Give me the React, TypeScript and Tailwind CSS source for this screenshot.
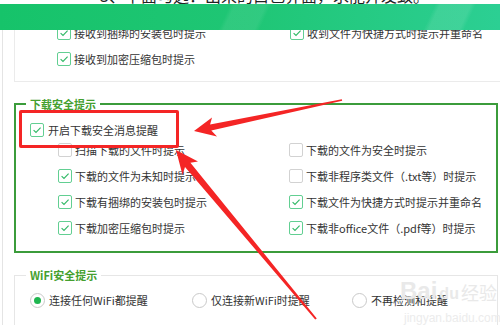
import React from "react";

const Check = ({ checked }: { checked: boolean }) => (
  <span
    className={
      checked
        ? "flex h-[14px] w-[14px] shrink-0 items-center justify-center rounded-[2px] border border-[#62cf92] bg-white"
        : "flex h-[14px] w-[14px] shrink-0 items-center justify-center rounded-[2px] border border-[#d2d2d2] bg-white"
    }
  >
    {checked && (
      <svg width="10" height="10" viewBox="0 0 10 10">
        <path d="M1.6 5.1 L4 7.5 L8.6 2.7" stroke="#2fb865" strokeWidth="1.1" fill="none" />
      </svg>
    )}
  </span>
);

const Item = ({ checked, label }: { checked: boolean; label: string }) => (
  <div className="flex h-[22px] items-center gap-[3px] whitespace-nowrap">
    <Check checked={checked} />
    <span>{label}</span>
  </div>
);

const Radio = ({ on, label, w }: { on: boolean; label: string; w: string }) => (
  <div className={`flex h-[22px] items-center gap-[4px] whitespace-nowrap ${w}`}>
    <span className="flex h-[15px] w-[15px] shrink-0 items-center justify-center rounded-full border border-[#c9c9c9] bg-white">
      {on && <span className="h-[7px] w-[7px] rounded-full bg-[#1fb650]" />}
    </span>
    <span>{label}</span>
  </div>
);

export default function App() {
  return (
    <div className="relative h-[325px] w-[500px] overflow-hidden bg-white font-['Noto_Sans_CJK_SC','Noto_Sans',sans-serif] text-[11px] text-[#333]">
      {/* clipped text line above the banner */}
      <div className="h-[4px] overflow-hidden">
        <div className="mt-[-13px] whitespace-nowrap pl-[100px] text-[16px] leading-[16px] text-[#222]">
          3、下面勾选：出来的白色界面，求能开发致。
        </div>
      </div>

      <div className="ml-[2px] border-l border-[#e4e4e4] pl-[11px] pr-[2px]">
        {/* box 1 */}
        <div className="mr-[-4px] box-border h-[78px] border border-[#ebebeb] pl-[42px] pt-[17px]">
          <div className="grid grid-cols-[233px_1fr] gap-y-[4px]">
            <Item checked label="接收到捆绑的安装包时提示" />
            <Item checked label="收到文件为快捷方式时提示并重命名" />
            <Item checked label="接收到加密压缩包时提示" />
            <div />
          </div>
        </div>

        {/* download section */}
        <fieldset className="mt-[14px] border-2 border-[#3b9c3b] pb-[12px] pl-[10px]">
          <legend className="px-[4px] text-[11px] font-bold leading-[16px] text-[#45a02f]">下载安全提示</legend>
          <div className="pl-[4px] pt-[9px]">
            <div className="flex h-[18px] items-center gap-[4px] whitespace-nowrap">
              <Check checked />
              <span>开启下载安全消息提醒</span>
            </div>
            <div className="grid grid-cols-[231px_1fr] gap-y-[4px] pl-[28px]">
              <Item checked={false} label="扫描下载的文件时提示" />
              <Item checked={false} label="下载的文件为安全时提示" />
              <Item checked label="下载的文件为未知时提示" />
              <Item checked={false} label="下载非程序类文件（.txt等）时提示" />
              <Item checked label="下载有捆绑的安装包时提示" />
              <Item checked label="下载文件为快捷方式时提示并重命名" />
              <Item checked label="下载加密压缩包时提示" />
              <Item checked label="下载非office文件（.pdf等）时提示" />
            </div>
          </div>
        </fieldset>

        {/* wifi section */}
        <fieldset className="mt-[14px] border border-[#e6e6e6] pb-[20px] pl-[11px]">
          <legend className="px-[4px] text-[11px] font-bold leading-[16px] text-[#45a02f]">WiFi安全提示</legend>
          <div className="flex items-center pl-[4px] pt-[6px]">
            <Radio on w="w-[162px]" label="连接任何WiFi都提醒" />
            <Radio on={false} w="w-[160px]" label="仅连接新WiFi时提醒" />
            <Radio on={false} w="w-[120px]" label="不再检测和提醒" />
          </div>
        </fieldset>
      </div>

      {/* green banner overlay */}
      <div className="absolute left-0 top-[4px] h-[26px] w-[500px] bg-gradient-to-r from-[#16c36a] via-[#1fc675] to-[#2ccf93]">
        <div className="absolute inset-0 bg-[linear-gradient(115deg,transparent_45%,rgba(255,255,255,0.08)_46%,rgba(255,255,255,0.08)_52%,transparent_53%,transparent_85%,rgba(255,255,255,0.1)_86%,rgba(255,255,255,0.1)_92%,transparent_93%)]" />
      </div>

      {/* watermark */}
      <div className="pointer-events-none absolute left-[400px] top-[278px] flex items-end gap-[2px] font-['Liberation_Sans',sans-serif] text-[#e9e9e9]">
        <span className="text-[24px] font-bold leading-[26px]">Bai</span>
        <span className="text-[16px] font-bold leading-[20px]">du</span>
        <span className="font-['Noto_Sans_CJK_SC',sans-serif] text-[18px] leading-[24px]">经验</span>
      </div>
      <div className="pointer-events-none absolute left-[404px] top-[309px] font-['Liberation_Sans',sans-serif] text-[12px] text-[#ececec]">
        jingyan.baidu.com
      </div>

      {/* red annotation */}
      <div className="pointer-events-none absolute left-[19px] top-[110px] h-[38px] w-[160px] rounded-[2px] border-[3px] border-[#f42525]" />
      <svg className="pointer-events-none absolute left-0 top-0" width="500" height="325" viewBox="0 0 500 325">
        <polygon
          fill="#f42525"
          points="194,131 217,136.5 211.3,130.6 342.2,100.8 341.8,99.2 210.1,124.5 212,117.5"
        />
        <polygon
          fill="#f42525"
          points="176,150 198,161.5 190.4,162.7 316.8,318.4 315.2,319.6 185,167 182.5,175"
        />
      </svg>
    </div>
  );
}
